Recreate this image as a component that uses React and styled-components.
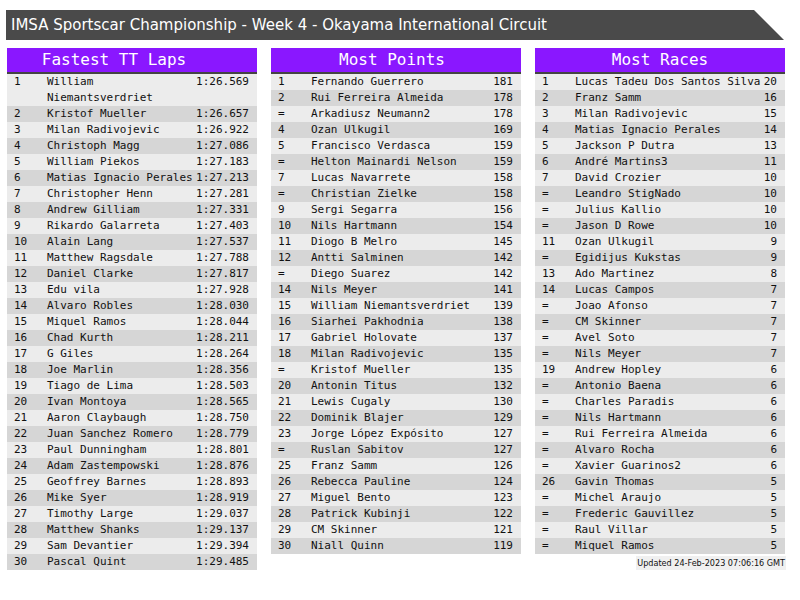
import React from "react";
import styled, { createGlobalStyle } from "styled-components";

const Global = createGlobalStyle`
  html, body { margin: 0; padding: 0; background: #fff; }
  body { font-family: "DejaVu Sans", sans-serif; }
`;

const Page = styled.div`
  width: 800px;
  padding: 10px 0 0 6px;
  box-sizing: border-box;
`;

const Title = styled.div`
  width: 778px;
  height: 30px;
  box-sizing: border-box;
  background: #4a4a4a;
  color: #fff;
  font-family: "DejaVu Sans", sans-serif;
  font-size: 15px;
  line-height: 30px;
  padding-left: 5px;
  clip-path: polygon(0 0, calc(100% - 30px) 0, 100% 100%, 0 100%);
  white-space: nowrap;
`;

const Columns = styled.div`
  display: flex;
  gap: 14px;
  margin: 8px 0 0 1px;
  align-items: flex-start;
`;

const Column = styled.div`
  width: 250px;
  display: flex;
  flex-direction: column;
`;

const Header = styled.div`
  height: 24px;
  background: #8a17ff;
  border-bottom: 2px solid #444;
  color: #fff;
  font-family: "DejaVu Sans Mono", monospace;
  font-size: 16px;
  line-height: 24px;
  text-align: center;
  padding-right: ${(p) => p.$shift || 0}px;
  white-space: nowrap;
`;

const Row = styled.div`
  display: grid;
  grid-template-columns: 33px minmax(0, 1fr) auto;
  padding: 0 8px 0 7px;
  background: ${(p) => (p.$alt ? "#d6d6d6" : "#ececec")};
  font-family: "DejaVu Sans Mono", monospace;
  font-size: 11px;
  line-height: 16px;
  color: #111;
`;

const Pos = styled.span``;
const Name = styled.span``;
const Val = styled.span`
  text-align: right;
`;

const Footer = styled.div`
  align-self: flex-end;
  margin: 2px -1px 0 0;
  background: #f0f0f0;
  padding: 0 1px;
  font-family: "DejaVu Sans Condensed", "DejaVu Sans", sans-serif;
  font-stretch: condensed;
  font-size: 9px;
  line-height: 14px;
  color: #111;
  white-space: nowrap;
`;

const parse = (s) =>
  s
    .trim()
    .split("\n")
    .map((l) => {
      const t = l.trim();
      const i = t.indexOf(" ");
      const j = t.lastIndexOf(" ");
      return [t.slice(0, i), t.slice(i + 1, j), t.slice(j + 1)];
    });

const laps = parse(`
1 William Niemantsverdriet 1:26.569
2 Kristof Mueller 1:26.657
3 Milan Radivojevic 1:26.922
4 Christoph Magg 1:27.086
5 William Piekos 1:27.183
6 Matias Ignacio Perales 1:27.213
7 Christopher Henn 1:27.281
8 Andrew Gilliam 1:27.331
9 Rikardo Galarreta 1:27.403
10 Alain Lang 1:27.537
11 Matthew Ragsdale 1:27.788
12 Daniel Clarke 1:27.817
13 Edu vila 1:27.928
14 Alvaro Robles 1:28.030
15 Miquel Ramos 1:28.044
16 Chad Kurth 1:28.211
17 G Giles 1:28.264
18 Joe Marlin 1:28.356
19 Tiago de Lima 1:28.503
20 Ivan Montoya 1:28.565
21 Aaron Claybaugh 1:28.750
22 Juan Sanchez Romero 1:28.779
23 Paul Dunningham 1:28.801
24 Adam Zastempowski 1:28.876
25 Geoffrey Barnes 1:28.893
26 Mike Syer 1:28.919
27 Timothy Large 1:29.037
28 Matthew Shanks 1:29.137
29 Sam Devantier 1:29.394
30 Pascal Quint 1:29.485
`);

const points = parse(`
1 Fernando Guerrero 181
2 Rui Ferreira Almeida 178
= Arkadiusz Neumann2 178
4 Ozan Ulkugil 169
5 Francisco Verdasca 159
= Helton Mainardi Nelson 159
7 Lucas Navarrete 158
= Christian Zielke 158
9 Sergi Segarra 156
10 Nils Hartmann 154
11 Diogo B Melro 145
12 Antti Salminen 142
= Diego Suarez 142
14 Nils Meyer 141
15 William Niemantsverdriet 139
16 Siarhei Pakhodnia 138
17 Gabriel Holovate 137
18 Milan Radivojevic 135
= Kristof Mueller 135
20 Antonin Titus 132
21 Lewis Cugaly 130
22 Dominik Blajer 129
23 Jorge López Expósito 127
= Ruslan Sabitov 127
25 Franz Samm 126
26 Rebecca Pauline 124
27 Miguel Bento 123
28 Patrick Kubinji 122
29 CM Skinner 121
30 Niall Quinn 119
`);

const races = parse(`
1 Lucas Tadeu Dos Santos Silva 20
2 Franz Samm 16
3 Milan Radivojevic 15
4 Matias Ignacio Perales 14
5 Jackson P Dutra 13
6 André Martins3 11
7 David Crozier 10
= Leandro StigNado 10
= Julius Kallio 10
= Jason D Rowe 10
11 Ozan Ulkugil 9
= Egidijus Kukstas 9
13 Ado Martinez 8
14 Lucas Campos 7
= Joao Afonso 7
= CM Skinner 7
= Avel Soto 7
= Nils Meyer 7
19 Andrew Hopley 6
= Antonio Baena 6
= Charles Paradis 6
= Nils Hartmann 6
= Rui Ferreira Almeida 6
= Alvaro Rocha 6
= Xavier Guarinos2 6
26 Gavin Thomas 5
= Michel Araujo 5
= Frederic Gauvillez 5
= Raul Villar 5
= Miquel Ramos 5
`);

function Board({ title, shift, rows, children }) {
  return (
    <Column>
      <Header $shift={shift}>{title}</Header>
      {rows.map(([p, n, v], i) => (
        <Row key={i} $alt={i % 2 === 1}>
          <Pos>{p}</Pos>
          <Name>{n}</Name>
          <Val>{v}</Val>
        </Row>
      ))}
      {children}
    </Column>
  );
}

export default function App() {
  return (
    <Page>
      <Global />
      <Title>IMSA Sportscar Championship - Week 4 - Okayama International Circuit</Title>
      <Columns>
        <Board title="Fastest TT Laps" shift={36} rows={laps} />
        <Board title="Most Points" shift={8} rows={points} />
        <Board title="Most Races" shift={-2} rows={races}>
          <Footer>Updated 24-Feb-2023 07:06:16 GMT</Footer>
        </Board>
      </Columns>
    </Page>
  );
}
